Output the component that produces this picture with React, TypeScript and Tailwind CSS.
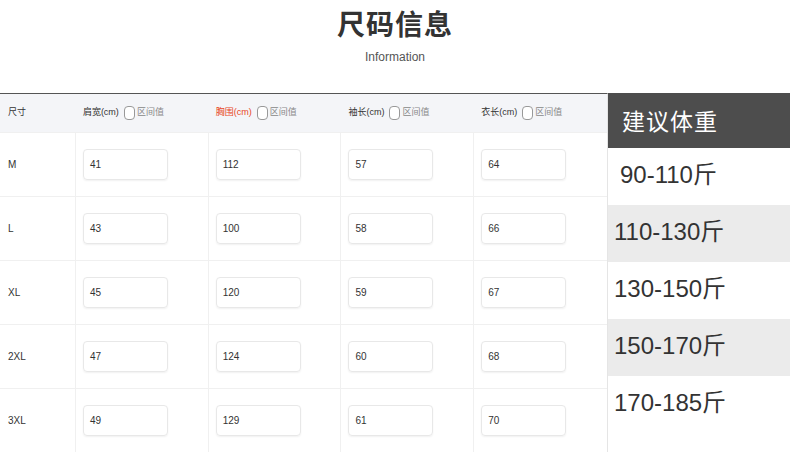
import React from "react";

const cjk = { fontFamily: '"Liberation Sans", "Noto Sans CJK SC", sans-serif' };

const rows = [
  { size: "M", v: ["41", "112", "57", "64"] },
  { size: "L", v: ["43", "100", "58", "66"] },
  { size: "XL", v: ["45", "120", "59", "67"] },
  { size: "2XL", v: ["47", "124", "60", "68"] },
  { size: "3XL", v: ["49", "129", "61", "70"] },
];

const heads = [
  { t: "肩宽(cm)", red: false },
  { t: "胸围(cm)", red: true },
  { t: "袖长(cm)", red: false },
  { t: "衣长(cm)", red: false },
];

const colW = ["w-[133px]", "w-[133px]", "w-[133px]", "w-[134px]"];

const weights = [
  { t: "90-110斤", bg: "bg-white", pl: "pl-[12px]" },
  { t: "110-130斤", bg: "bg-[#ebebeb]", pl: "pl-[6px]" },
  { t: "130-150斤", bg: "bg-white", pl: "pl-[6px]" },
  { t: "150-170斤", bg: "bg-[#ebebeb]", pl: "pl-[6px]" },
  { t: "170-185斤", bg: "bg-white", pl: "pl-[6px]" },
];

export default function App() {
  return (
    <div className="w-[790px] h-[453px] overflow-hidden bg-white" style={cjk}>
      <div className="h-[93px] flex flex-col items-center pt-[9px]">
        <div className="text-[28px] leading-none font-bold text-[#333] tracking-[1px]" style={{ fontFamily: '"Noto Sans CJK SC", sans-serif' }}>
          尺码信息
        </div>
        <div className="mt-[14px] text-[12px] leading-none text-[#555]" style={{ fontFamily: '"Liberation Sans", sans-serif' }}>
          Information
        </div>
      </div>
      <div className="flex">
        <div className="w-[608px] border-t border-[#555] border-r border-r-[#e5e5e5]">
          <div className="flex h-[38px] bg-[#f4f5f8] items-center text-[9px] text-[#333]">
            <div className="w-[75px] pl-[8px]">尺寸</div>
            {heads.map((h, i) => (
              <div key={i} className={`${colW[i]} pl-[8px] flex items-center`}>
                <span className={h.red ? "text-[#e8461e]" : "text-[#333]"}>{h.t}</span>
                <span className="ml-[5px] w-[11px] h-[14px] rounded-[4px] border border-[#999] bg-white"></span>
                <span className="ml-[2px] text-[#888]">区间值</span>
              </div>
            ))}
          </div>
          {rows.map((r, ri) => (
            <div key={ri} className="flex h-[64px] border-t border-[#f0f0f0] text-[10px] text-[#333]">
              <div className="w-[75px] pl-[8px] flex items-center">{r.size}</div>
              {r.v.map((v, i) => (
                <div key={i} className={`${colW[i]} border-l border-[#f0f0f0] pl-[7px] flex items-center`}>
                  <div className="w-[85px] h-[31px] rounded-[4px] border border-[#e8e8e8] shadow-[0_1px_2px_rgba(0,0,0,0.06)] flex items-center pl-[6px]">
                    {v}
                  </div>
                </div>
              ))}
            </div>
          ))}
        </div>
        <div className="w-[182px] flex flex-col">
          <div className="h-[55px] bg-[#4d4d4d] text-white text-[23px] flex items-center pl-[14px] tracking-[1px]" style={{ fontFamily: '"Noto Sans CJK SC", sans-serif' }}>
            建议体重
          </div>
          {weights.map((w, i) => (
            <div key={i} className={`h-[57px] ${w.bg} ${w.pl} flex items-center text-[24px] text-[#333] pb-[3px]`}>
              {w.t}
            </div>
          ))}
        </div>
      </div>
    </div>
  );
}
